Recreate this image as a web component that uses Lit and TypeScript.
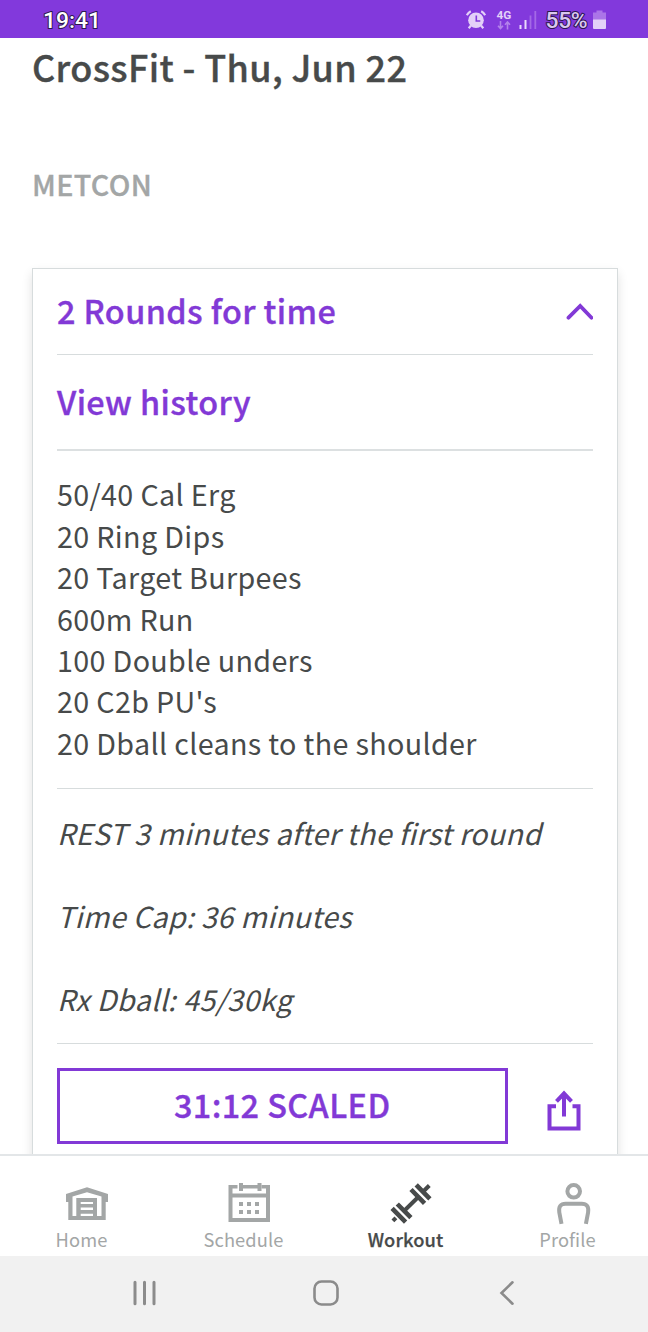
import { LitElement, html, css, svg } from "lit";
import { customElement, property } from "lit/decorators.js";
import { classMap } from "lit/directives/class-map.js";

const homeIcon = svg`<path fill="currentColor" fill-rule="evenodd" d="M0 12L21 5.300L42 12V20H39.700V38H2.300V20H0ZM6.500 14.600V34H10.300V16H31V34H35.500V14.600L21 10.200ZM14.700 20H27V22H14.700ZM14.700 25.500H27V28H14.700ZM14.700 31.700H27V34H14.700Z"/>`;

const scheduleIcon = svg`<g fill="currentColor">
  <path d="M0.500 3H9.500V6.500H4.500V11.500H38V6.500H33.500V3H42V40H0.500ZM4.500 15.500V36H38V15.500Z" fill-rule="evenodd"/>
  <path d="M11 1h4v8h-4zM29.500 1h4v8h-4zM13 3h14.500v3.500H13zM27 3h3v3.500h-3z"/>
  <path d="M11 20h4v4h-4zM19 20h4v4h-4zM27 20h4v4h-4zM11 28h4v4h-4zM19 28h4v4h-4zM27 28h4v4h-4z"/>
</g>`;

const workoutIcon = svg`<g stroke="currentColor" stroke-width="4" fill="none">
  <path d="M2.900 38.900l3-3M13.500 29.500L27.500 15.800M33 9.700L39.300 3.500"/>
  <path d="M2.100 26.400L15.600 40.200M7.300 22L20.900 35.700M21 7.500L34.600 21.300M26.200 2.900L39.900 16.900" stroke-width="4.600"/>
</g>`;

const profileIcon = svg`<g stroke="currentColor" stroke-width="4" fill="none">
  <circle cx="21.700" cy="9.300" r="6.300"/>
  <path d="M9.500 41.800L7.300 30.500Q6 21.700 13.700 21.700H29.700Q37.400 21.700 36.100 30.500L33.900 41.800"/>
</g>`;

@customElement("nav-tab")
class NavTab extends LitElement {
  @property() label = "";
  @property({ attribute: false }) icon: unknown;
  @property({ type: Boolean }) active = false;

  static styles = css`
    :host { flex: 1; display: block; }
    .tab {
      display: flex; flex-direction: column; align-items: center;
      color: #a3a6a6; padding: 26px 0 0 1px;
    }
    .active { color: #474a4a; font-weight: 500; -webkit-text-stroke: 0.25px currentColor; }
    svg { display: block; margin-left: 11px; overflow: visible; }
    .label { font-size: 18.3px; line-height: 28px; letter-spacing: 0.1px; margin-top: 1px; }
  `;

  render() {
    return html`<div class=${classMap({ tab: true, active: this.active })}>
      <svg width="42" height="42" viewBox="0 0 42 42">${this.icon}</svg>
      <span class="label">${this.label}</span>
    </div>`;
  }
}

@customElement("app-root")
class AppRoot extends LitElement {
  static styles = css`
    :host {
      display: flex; flex-direction: column; width: 648px; height: 1332px;
      background: #fff; color: #474a4a; overflow: hidden;
      font-family: "Noto Sans CJK SC", "Noto Sans", sans-serif;
    }
    * { box-sizing: border-box; }
    svg { display: block; flex: none; }
    .status {
      flex: none; height: 38px; background: #8239dc; display: flex; align-items: center;
      padding: 2px 42px 0 43px; font-family: Roboto, sans-serif;
    }
    .clock, .percent {
      font-size: 22.8px; line-height: 26px; font-weight: 500; color: #fff; padding-top: 2px;
      -webkit-text-stroke: 2px #2d1650; paint-order: stroke fill;
    }
    .clock { flex: 1; }
    .percent { color: #dac8ef; margin-left: 9px; width: 43px; letter-spacing: -0.3px; }
    .network { display: flex; flex-direction: column; align-items: center; width: 15px; margin-left: 11px; }
    .gen { font-size: 11.8px; line-height: 11px; font-weight: 700; color: #e3d0f8; }
    .signal { margin-left: 7px; }
    .battery { margin-left: 4.5px; }
    main { flex: none; height: 1116px; overflow: hidden; padding: 2px 30px 0 32px; }
    h1, h2, p { margin: 0; white-space: nowrap; }
    h1, h2, .row, .score { font-weight: 500; -webkit-text-stroke: 0.35px currentColor; }
    h1 { font-size: 36px; line-height: 52px; letter-spacing: 0.36px; }
    h2 { font-size: 28.7px; line-height: 42px; letter-spacing: 0.35px; color: #a3a6a6; margin-top: 71px; }
    .card {
      margin-top: 63px; height: 1000px; border: 1px solid #d7dcdd; padding: 0 24px;
      box-shadow: 0 5px 10px rgba(0, 0, 0, 0.12);
    }
    .row {
      display: flex; align-items: center; padding-bottom: 2px;
      color: #8239d6; font-size: 32.4px; line-height: 46px; letter-spacing: 0.4px;
    }
    .head { height: 86px; justify-content: space-between; border-bottom: 1px solid #d7dcdd; padding-bottom: 3px; }
    .history { height: 96px; border-bottom: 2px solid #dce0e1; }
    .lines {
      font-size: 28.7px; line-height: 41.4px; letter-spacing: 0.34px;
      border-bottom: 1px solid #d7dcdd;
    }
    .moves { height: 338px; padding-top: 22.4px; }
    .notes { height: 255px; padding-top: 23px; font-style: italic; }
    .note + .note { margin-top: 41.4px; }
    .actions { display: flex; align-items: flex-start; padding-top: 24px; }
    .score {
      width: 450.500px; height: 75.500px; border: 3px solid #8239d6; background: #fff; padding: 0 0 3px;
      color: #8239d6; font-family: inherit; font-size: 32.4px; line-height: 46px; letter-spacing: 0.4px;
    }
    .share { margin: 22px 0 0 39px; }
    nav { flex: none; height: 102px; display: flex; border-top: 2px solid #e3e6e8; }
    .system {
      flex: none; height: 76px; background: #f1f1f1; display: flex; align-items: center;
      justify-content: space-between; padding: 0 132px 2px 131px;
    }
    .overview { margin-right: -4px; }
  `;

  moves = [
    "50/40 Cal Erg", "20 Ring Dips", "20 Target Burpees", "600m Run",
    "100 Double unders", "20 C2b PU's", "20 Dball cleans to the shoulder",
  ];
  notes = ["REST 3 minutes after the first round", "Time Cap: 36 minutes", "Rx Dball: 45/30kg"];

  statusBar() {
    return html`<div class="status">
      <span class="clock">19:41</span>
      <svg width="20" height="20" viewBox="0 0 20 20">
        <circle cx="10" cy="10.300" r="7.800" fill="#e3d0f8"/>
        <path d="M0.800 5.200Q2.300 2.500 4.800 1.200M19.200 5.200Q17.700 2.500 15.200 1.200M5 15.500L2.700 18.300M15 15.500L17.300 18.300" stroke="#e3d0f8" stroke-width="2.200" fill="none"/>
        <path d="M10.300 5.500v5.500h4" stroke="#8239dc" stroke-width="1.600" fill="none"/>
      </svg>
      <div class="network">
        <span class="gen">4G</span>
        <svg width="14" height="9" viewBox="0 0 14 9">
          <path d="M3.500 0v7M1 4.800l2.500 2.700L6 4.800M10.500 8.500v-7M8 3.700L10.500 1L13 3.700" stroke="#b383ea" stroke-width="1.600" fill="none"/>
        </svg>
      </div>
      <svg class="signal" width="18" height="20" viewBox="0 0 18 20">
        <path d="M1.500 15v4M6.500 10v9" stroke="#eadcfb" stroke-width="2"/>
        <path d="M11.500 5.500V19M16.300 1V19" stroke="#a469e6" stroke-width="1.800"/>
      </svg>
      <span class="percent">55%</span>
      <svg class="battery" width="13" height="20" viewBox="0 0 13 20">
        <path d="M3.500 0.500h6v2H13V10H0V2.500h3.500z" fill="#ab75e8"/>
        <path d="M0 9.500h13V18q0 1-1 1H1q-1 0-1-1z" fill="#e3d0f8"/>
      </svg>
    </div>`;
  }

  render() {
    return html`
      ${this.statusBar()}
      <main>
        <h1>CrossFit - Thu, Jun 22</h1>
        <h2>METCON</h2>
        <section class="card">
          <div class="row head">
            <span>2 Rounds for time</span>
            <svg width="28" height="20" viewBox="0 0 28 20">
              <path d="M3.500 17.700L15.200 6L26.500 17.700" fill="none" stroke="#8239d6" stroke-width="3.800" stroke-linecap="round"/>
            </svg>
          </div>
          <div class="row history">View history</div>
          <div class="lines moves">${this.moves.map((m) => html`<p>${m}</p>`)}</div>
          <div class="lines notes">${this.notes.map((n) => html`<p class="note">${n}</p>`)}</div>
          <div class="actions">
            <button class="score">31:12 SCALED</button>
            <svg class="share" width="34" height="42" viewBox="0 0 34 42">
              <g fill="none" stroke="#8239d6" stroke-width="4">
                <path d="M9 16.300H2.500V38.500H31.500V16.300H25.500"/>
                <path d="M17 26.500V4M9.500 11.300L17 3.500L24.500 11.300"/>
              </g>
            </svg>
          </div>
        </section>
      </main>
      <nav>
        <nav-tab label="Home" .icon=${homeIcon}></nav-tab>
        <nav-tab label="Schedule" .icon=${scheduleIcon}></nav-tab>
        <nav-tab label="Workout" .icon=${workoutIcon} active></nav-tab>
        <nav-tab label="Profile" .icon=${profileIcon}></nav-tab>
      </nav>
      <div class="system">
        <svg class="overview" width="27" height="26" viewBox="0 0 27 26">
          <path d="M4 2.300V23.700M13.500 2.300V23.700M23 2.300V23.700" stroke="#8b8b8b" stroke-width="3" stroke-linecap="round"/>
        </svg>
        <svg width="26" height="26" viewBox="0 0 26 26">
          <rect x="1.500" y="1.500" width="23" height="23" rx="7" fill="none" stroke="#8b8b8b" stroke-width="2.600"/>
        </svg>
        <svg width="18" height="26" viewBox="0 0 18 26">
          <path d="M14.500 2.300L3.500 13L14.500 23.700" fill="none" stroke="#8b8b8b" stroke-width="2.600" stroke-linecap="round"/>
        </svg>
      </div>
    `;
  }
}
